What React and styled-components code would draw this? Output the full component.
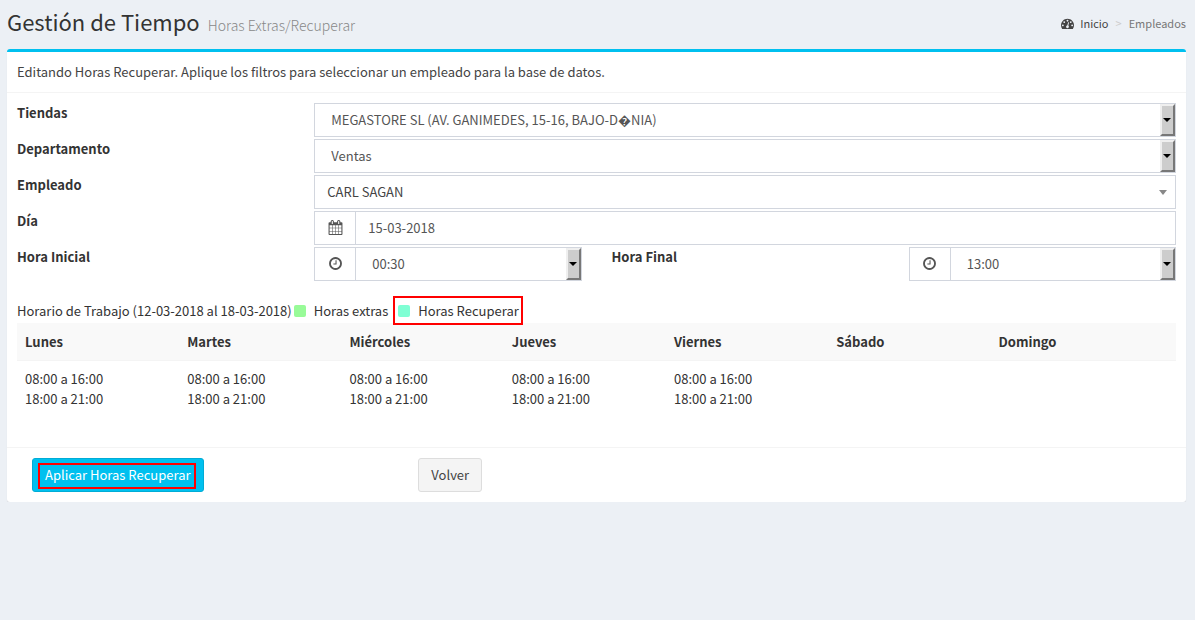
import React from "react";
import styled, { createGlobalStyle, css } from "styled-components";

const GlobalStyle = createGlobalStyle`
  *, *::before, *::after { box-sizing: border-box; }
  body {
    margin: 0;
    background: #ecf0f5;
    color: #333;
    font-family: "Noto Sans CJK SC", "Open Sans", sans-serif;
    font-size: 13px;
    line-height: 20px;
  }
  button, input, select { font: inherit; }
`;

const Page = styled.main`
  padding: 6px 9px 0 7px;
`;

const PageHeader = styled.header`
  display: flex;
  align-items: center;
  justify-content: space-between;
  height: 34px;
  margin-bottom: 9px;
`;

const Title = styled.h1`
  display: flex;
  align-items: baseline;
  gap: 8px;
  margin: 0;
  font-size: 22px;
  font-weight: 400;
  line-height: 32px;
`;

const Subtitle = styled.small`
  color: #888;
  font-size: 14px;
  font-weight: 200;
`;

const Breadcrumb = styled.nav`
  display: flex;
  align-items: center;
  gap: 7px;
  color: #777;
  font-size: 11px;
`;

const HomeLink = styled.a`
  display: flex;
  align-items: center;
  gap: 6px;
  color: #444;
  text-decoration: none;
`;

const Separator = styled.span`
  color: #ccc;
`;

const Box = styled.section`
  background: #fff;
  border-top: 3px solid #00c0ef;
  border-radius: 3px;
  box-shadow: 0 1px 1px rgba(0, 0, 0, 0.1);
`;

const BoxHeader = styled.div`
  padding: 10px;
  border-bottom: 1px solid #f4f4f4;
  color: #444;
`;

const BoxBody = styled.div`
  padding: 10px;
`;

const Fields = styled.div`
  display: grid;
  grid-template-columns: repeat(4, 1fr);
  gap: 2px 30px;
`;

const Label = styled.label`
  font-weight: 700;
`;

const Control = styled.div`
  grid-column: span ${(p) => p.$span || 3};
  display: flex;
  min-width: 0;
  height: 34px;
  border: 1px solid #d2d6de;
`;

const Addon = styled.span`
  display: flex;
  align-items: center;
  justify-content: center;
  flex: none;
  width: 41px;
  padding-bottom: 1px;
  border-right: 1px solid #d2d6de;
  color: #555;
`;

const Icon = styled.svg`
  display: block;
  width: ${(p) => p.$size || 15}px;
  height: ${(p) => p.$size || 15}px;
  fill: currentColor;
`;

const TextInput = styled.input`
  flex: 1;
  min-width: 0;
  padding: 0 12px;
  border: 0;
  background: #fff;
  color: #555;
`;

const bevel = css`
  width: 15px;
  border: 2px solid;
  border-color: #efefef #777 #777 #efefef;
  background: #cdcdcd;
`;

const SelectFrame = styled.span`
  position: relative;
  display: flex;
  flex: 1;
  min-width: 0;

  &::before {
    content: "";
    position: absolute;
    top: 0;
    right: 0;
    bottom: 0;
    pointer-events: none;
    ${(p) => !p.$flat && bevel}
  }

  &::after {
    content: "";
    position: absolute;
    top: 14px;
    right: ${(p) => (p.$flat ? 8 : 4)}px;
    border: solid transparent;
    border-width: ${(p) => (p.$flat ? "5px 4px 0" : "4px 4px 0")};
    border-top-color: ${(p) => (p.$flat ? "#888" : "#000")};
    pointer-events: none;
  }
`;

const Select = styled.select`
  flex: 1;
  min-width: 0;
  padding: 0 24px 0 ${(p) => (p.$flat ? 12 : 16)}px;
  appearance: none;
  border: 0;
  border-radius: 0;
  background: #fff;
  color: ${(p) => (p.$flat ? "#444" : "#555")};
`;

const Legend = styled.div`
  display: flex;
  margin-top: 20px;
`;

const LegendItem = styled.span`
  position: relative;
  display: flex;
  align-items: center;
  gap: 8px;
  margin-left: ${(p) => (p.$marked ? 10 : 2)}px;

  ${(p) =>
    p.$marked &&
    css`
      &::after {
        content: "";
        position: absolute;
        inset: -5px -4px -4px -5px;
        border: 2px solid #f00;
      }
    `}
`;

const Swatch = styled.i`
  width: 12px;
  height: 12px;
  border-radius: 2px;
  background: ${(p) => p.$color};
`;

const Schedule = styled.table`
  width: 100%;
  margin-top: 2px;
  border-collapse: collapse;
  table-layout: fixed;
`;

const DayHead = styled.th`
  width: 14%;
  padding: 9px 8px 8px;
  border-bottom: 1px solid #f4f4f4;
  background: #f9f9f9;
  font-weight: 700;
  text-align: left;

  &:last-child {
    width: auto;
  }
`;

const DayCell = styled.td`
  height: 76px;
  padding: 8px;
  vertical-align: top;
`;

const Shift = styled.div`
  height: 20px;
`;

const BoxFooter = styled.footer`
  display: grid;
  grid-template-columns: repeat(3, 1fr);
  padding: 10px;
  border-top: 1px solid #f4f4f4;
`;

const Action = styled.div`
  display: flex;
  padding: 0 15px;
`;

const Button = styled.button`
  position: relative;
  height: 34px;
  padding: 0 12px;
  border: 1px solid ${(p) => (p.$primary ? "#00acd6" : "#ddd")};
  border-radius: 3px;
  background: ${(p) => (p.$primary ? "#00c0ef" : "#f4f4f4")};
  color: ${(p) => (p.$primary ? "#fff" : "#444")};
  white-space: nowrap;
  cursor: pointer;

  ${(p) =>
    p.$primary &&
    css`
      &::after {
        content: "";
        position: absolute;
        inset: 4px 7px 2px 5px;
        border: 2px solid #f00;
      }
    `}
`;

const DASHBOARD =
  "M384 1152q0-53-37.5-90.5t-90.5-37.5-90.5 37.5-37.5 90.5 37.5 90.5 90.5 37.5 90.5-37.5 37.5-90.5zm192-448q0-53-37.5-90.5t-90.5-37.5-90.5 37.5-37.5 90.5 37.5 90.5 90.5 37.5 90.5-37.5 37.5-90.5zm428 481l101-382q6-26-7.5-48.5t-38.5-29.5-48 6.5-30 39.5l-101 382q-60 5-107 43.5t-63 98.5q-20 77 20 146t117 89 146-20 89-117q16-60-6-117t-72-91zm660-33q0-53-37.5-90.5t-90.5-37.5-90.5 37.5-37.5 90.5 37.5 90.5 90.5 37.5 90.5-37.5 37.5-90.5zm-640-640q0-53-37.5-90.5t-90.5-37.5-90.5 37.5-37.5 90.5 37.5 90.5 90.5 37.5 90.5-37.5 37.5-90.5zm448 192q0-53-37.5-90.5t-90.5-37.5-90.5 37.5-37.5 90.5 37.5 90.5 90.5 37.5 90.5-37.5 37.5-90.5zm320 448q0 261-141 483-19 29-54 29h-1402q-35 0-54-29-141-221-141-483 0-182 71-348t191-286 286-191 348-71 348 71 286 191 191 286 71 348z";
const CLOCK =
  "M1024 544v448q0 14-9 23t-23 9h-320q-14 0-23-9t-9-23v-64q0-14 9-23t23-9h224v-352q0-14 9-23t23-9h64q14 0 23 9t9 23zm416 352q0-148-73-273t-198-198-273-73-273 73-198 198-73 273 73 273 198 198 273 73 273-73 198-198 73-273zm224 0q0 209-103 385.5t-279.5 279.5-385.5 103-385.5-103-279.5-279.5-103-385.5 103-385.5 279.5-279.5 385.5-103 385.5 103 279.5 279.5 103 385.5z";
const CALENDAR =
  "M192 1664h288v-288h-288v288zm352 0h320v-288h-320v288zm-352-352h288v-320h-288v320zm352 0h320v-320h-320v320zm-352-384h288v-288h-288v288zm736 736h320v-288h-320v288zm-384-736h320v-288h-320v288zm768 736h288v-288h-288v288zm-384-352h320v-320h-320v320zm-352-864v-288q0-13-9.5-22.5t-22.5-9.5h-64q-13 0-22.5 9.5t-9.5 22.5v288q0 13 9.5 22.5t22.5 9.5h64q13 0 22.5-9.5t9.5-22.5zm736 864h288v-320h-288v320zm-384-384h320v-288h-320v288zm384 0h288v-288h-288v288zm32-480v-288q0-13-9.5-22.5t-22.5-9.5h-64q-13 0-22.5 9.5t-9.5 22.5v288q0 13 9.5 22.5t22.5 9.5h64q13 0 22.5-9.5t9.5-22.5zm384-64v1280q0 52-38 90t-90 38h-1408q-52 0-90-38t-38-90v-1280q0-52 38-90t90-38h128v-96q0-66 47-113t113-47h64q66 0 113 47t47 113v96h384v-96q0-66 47-113t113-47h64q66 0 113 47t47 113v96h128q52 0 90 38t38 90z";

function Glyph({ path, size }) {
  return (
    <Icon $size={size} viewBox="0 0 1792 1792" aria-hidden="true">
      <path d={path} />
    </Icon>
  );
}

function SelectField({ id, label, value, flat, icon, span }) {
  return (
    <>
      <Label htmlFor={id}>{label}</Label>
      <Control $span={span}>
        {icon && (
          <Addon>
            <Glyph path={icon} />
          </Addon>
        )}
        <SelectFrame $flat={flat}>
          <Select id={id} $flat={flat} defaultValue={value}>
            <option>{value}</option>
          </Select>
        </SelectFrame>
      </Control>
    </>
  );
}

const SHIFTS = ["08:00 a 16:00", "18:00 a 21:00"];
const WEEK = [
  ["Lunes", SHIFTS],
  ["Martes", SHIFTS],
  ["Miércoles", SHIFTS],
  ["Jueves", SHIFTS],
  ["Viernes", SHIFTS],
  ["Sábado", []],
  ["Domingo", []],
];

export default function App() {
  return (
    <>
      <GlobalStyle />
      <Page>
        <PageHeader>
          <Title>
            Gestión de Tiempo <Subtitle>Horas Extras/Recuperar</Subtitle>
          </Title>
          <Breadcrumb>
            <HomeLink href="#inicio">
              <Glyph path={DASHBOARD} size={13} />
              Inicio
            </HomeLink>
            <Separator>&gt;</Separator>
            <span>Empleados</span>
          </Breadcrumb>
        </PageHeader>
        <Box>
          <BoxHeader>
            Editando Horas Recuperar. Aplique los filtros para seleccionar un
            empleado para la base de datos.
          </BoxHeader>
          <BoxBody>
            <Fields>
              <SelectField
                id="tiendas"
                label="Tiendas"
                value={"MEGASTORE SL (AV. GANIMEDES, 15-16, BAJO-D\uFFFDNIA)"}
              />
              <SelectField id="departamento" label="Departamento" value="Ventas" />
              <SelectField id="empleado" label="Empleado" value="CARL SAGAN" flat />
              <Label htmlFor="dia">Día</Label>
              <Control>
                <Addon>
                  <Glyph path={CALENDAR} />
                </Addon>
                <TextInput id="dia" type="text" defaultValue="15-03-2018" />
              </Control>
              <SelectField id="inicial" label="Hora Inicial" value="00:30" icon={CLOCK} span={1} />
              <SelectField id="final" label="Hora Final" value="13:00" icon={CLOCK} span={1} />
            </Fields>
            <Legend>
              <span>Horario de Trabajo (12-03-2018 al 18-03-2018)</span>
              <LegendItem>
                <Swatch $color="#98fb98" />
                Horas extras
              </LegendItem>
              <LegendItem $marked>
                <Swatch $color="#7fffd4" />
                Horas Recuperar
              </LegendItem>
            </Legend>
            <Schedule>
              <thead>
                <tr>
                  {WEEK.map(([day]) => (
                    <DayHead key={day} scope="col">
                      {day}
                    </DayHead>
                  ))}
                </tr>
              </thead>
              <tbody>
                <tr>
                  {WEEK.map(([day, shifts]) => (
                    <DayCell key={day}>
                      {shifts.map((shift) => (
                        <Shift key={shift}>{shift}</Shift>
                      ))}
                    </DayCell>
                  ))}
                </tr>
              </tbody>
            </Schedule>
          </BoxBody>
          <BoxFooter>
            <Action>
              <Button type="button" $primary>
                Aplicar Horas Recuperar
              </Button>
            </Action>
            <Action>
              <Button type="button">Volver</Button>
            </Action>
          </BoxFooter>
        </Box>
      </Page>
    </>
  );
}
